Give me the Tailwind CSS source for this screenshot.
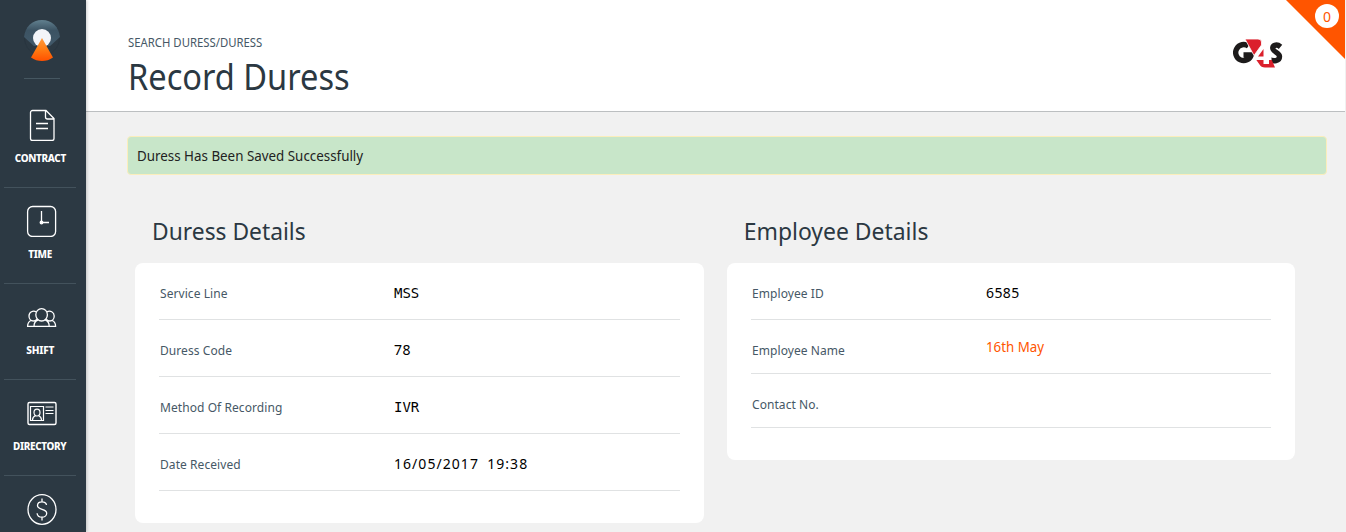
<!DOCTYPE html>
<html lang="en">
<head>
<meta charset="utf-8">
<title>Record Duress</title>
<script src="https://cdn.jsdelivr.net/npm/@tailwindcss/browser@4"></script>
</head>
<body class="flex h-[532px] w-[1346px] overflow-hidden bg-[#f1f1f1] font-['Noto_Sans',sans-serif] text-[#2b3842]">
<nav class="relative z-10 flex w-[86px] shrink-0 flex-col bg-[#2c3943] text-white shadow-[1px_0_3px_rgba(0,0,0,0.2)]">
  <div class="ml-6 h-[79px] w-9 shrink-0 border-b border-[#465761] pt-[19px]">
    <svg class="block" width="36" height="43" viewBox="0 0 36 43">
      <defs>
        <linearGradient id="dome" x1="0" y1="0" x2="0" y2="1"><stop offset="0" stop-color="#61808f"/><stop offset=".4" stop-color="#3c5363"/><stop offset="1" stop-color="#41596a"/></linearGradient>
        <linearGradient id="beam" x1="0" y1="0" x2="0" y2="1"><stop offset="0" stop-color="#ff9a3c"/><stop offset=".5" stop-color="#ff7c12"/><stop offset="1" stop-color="#ff5000"/></linearGradient>
      </defs>
      <circle cx="18" cy="19" r="17.5" fill="none" stroke="#27343d" stroke-width=".7"/>
      <path d="M0 18C1 8 8 1 18 1s17 7 18 17L26 27H10Z" fill="url(#dome)"/>
      <circle cx="18" cy="19" r="9" fill="#f3f5f9"/>
      <path d="M18 19 29 38.5Q24 42 18 42T7 38.5Z" fill="url(#beam)"/>
    </svg>
  </div>
  <a class="ml-1 flex h-[109px] w-[72px] shrink-0 flex-col items-center border-b border-[#43525c] pt-[30px]">
    <svg class="ml-[3px] h-8 w-8" viewBox="0 0 32 32" fill="none" stroke="#fff" stroke-width="1.3"><path d="M6.500 1.500H20l8 8v20a2 2 0 0 1-2 2H6.500a2 2 0 0 1-2-2v-26a2 2 0 0 1 2-2ZM19.500 1.500v6.500a2 2 0 0 0 2 2H28M10 14.500h12M10 19.500h12"/></svg>
    <span class="mt-[9px] scale-x-[0.9] text-[11px] leading-4 font-extrabold tracking-[-0.35px]">CONTRACT</span>
  </a>
  <a class="ml-1 flex h-24 w-[72px] shrink-0 flex-col items-center border-b border-[#43525c] pt-[17px]">
    <svg class="ml-[3px] h-8 w-8" viewBox="0 0 32 32" fill="none" stroke="#fff" stroke-width="1.3"><rect x="1.600" y="1.500" width="28" height="30" rx="5"/><path d="M15.500 6v11.500H23"/><circle cx="15.500" cy="17.500" r="1.300" fill="#fff"/></svg>
    <span class="mt-[9px] scale-x-[0.9] text-[11px] leading-4 font-extrabold tracking-[-0.35px]">TIME</span>
  </a>
  <a class="ml-1 flex h-24 w-[72px] shrink-0 flex-col items-center border-b border-[#43525c] pt-[17px]">
    <svg class="ml-[3px] h-8 w-8" viewBox="0 0 32 32" fill="none" stroke="#fff" stroke-width="1.3"><ellipse cx="15.600" cy="13.800" rx="5.800" ry="6.200"/><path d="M8 25.400c0-3.500 1.600-5.500 4-6.200M23.200 25.400c0-3.500-1.600-5.500-4-6.200M10.500 11C7 9 3 11 3 15c0 3 2 5 4.300 5 1.600 0 3-.8 3.700-2.300M20.700 11c3.500-2 7.500 0 7.500 4 0 3-2 5-4.300 5-1.600 0-3-.8-3.700-2.300M5 19.500c-2.200 1-3.400 3-3.400 5.900h28c0-2.900-1.200-4.900-3.400-5.900"/></svg>
    <span class="mt-[9px] scale-x-[0.92] text-[11px] leading-4 font-extrabold tracking-[-0.2px]">SHIFT</span>
  </a>
  <a class="ml-1 flex h-24 w-[72px] shrink-0 flex-col items-center border-b border-[#43525c] pt-[17px]">
    <svg class="ml-[3px] h-8 w-8" viewBox="0 0 32 32" fill="none" stroke="#fff" stroke-width="1.200"><rect x="2" y="5.500" width="28" height="22" rx="1.500" stroke-width="1.400"/><path d="M4.500 9.500h13v14h-13zM19.500 10h8M19.500 13.500h8M19.500 16.500h8M6.500 23c0-2.500 1-3.500 3-4.500M15.500 23c0-2.500-1-3.500-3-4.500"/><ellipse cx="11" cy="15.600" rx="3" ry="3.400"/></svg>
    <span class="mt-[9px] scale-x-[0.9] text-[11px] leading-4 font-extrabold tracking-[-0.35px]">DIRECTORY</span>
  </a>
  <a class="ml-1 flex w-[72px] flex-col items-center pt-[17px]">
    <svg class="ml-[3px] h-8 w-8" viewBox="0 0 32 32" fill="none" stroke="#fff" stroke-width="1.3"><ellipse cx="16" cy="16.500" rx="14" ry="14.800"/><path d="M20.500 12c-.3-2-2-3.200-4.500-3.200s-4.500 1.500-4.500 3.700c0 5 9.200 2.500 9.200 7.700 0 2.300-2 4-4.700 4s-4.700-1.500-4.900-4M16 5.500v3.300M16 24.200v3.300"/></svg>
  </a>
</nav>
<main class="min-w-0 flex-1">
  <header class="relative flex h-28 w-[1259px] justify-between border-b border-[#bcbfc1] bg-white">
    <div class="pt-[35px] pl-[42px]">
      <p class="origin-left scale-x-[0.945] text-[12px] leading-4 whitespace-nowrap text-[#465866]">SEARCH DURESS/DURESS</p>
      <h1 class="mt-[3px] origin-left scale-x-[0.905] text-[36px] leading-[46px] whitespace-nowrap">Record Duress</h1>
    </div>
    <svg class="mt-[38px] mr-[62px] h-[30px] w-[50px]" viewBox="0 0 50 30">
      <path d="M15.500 8.200A8 8 0 1 0 18.300 17H10.500" fill="none" stroke="#1d1b1b" stroke-width="5.400"/>
      <path d="M47.500 8.800C43.500 5.500 39 7.500 40 11c1.200 3.800 6.500 3.500 6.500 7.500 0 4.500-6 5.500-10.500 2.800" fill="none" stroke="#1d1b1b" stroke-width="5.400"/>
      <path d="M12 1h13q3.500 0 3.500 3v3L21 17.500Z" fill="#db202c" stroke="#fff" stroke-width=".8"/>
      <path d="M23 21.500h15.500l3.500 8H32q-4 0-5.500-3Z" fill="#db202c"/>
      <path d="M30.500 9.500H36v9h2.500V22H36v4h-5.500v-4H22v-3Z" fill="#fff"/>
      <path d="M30.500 11v7.500h-5.500Z" fill="#db202c"/>
    </svg>
    <svg class="absolute top-0 right-0 h-[59px] w-[59px]" viewBox="0 0 59 59"><path d="M0 0h59v59Z" fill="#ff5500"/></svg>
    <span class="absolute top-1 right-1.5 flex h-6 w-6 items-center justify-center rounded-full bg-white text-[14px] text-[#ff5500]">0</span>
  </header>
  <div class="mt-6 ml-[41px] flex h-[39px] w-[1200px] items-center rounded-[4px] border border-[#fbeebc] bg-[#c8e6c9] px-[9px] text-[14px] text-[#222]"><span class="origin-left scale-x-[0.955] whitespace-nowrap">Duress Has Been Saved Successfully</span></div>
  <div class="mt-[39px] ml-[49px] flex items-start gap-[23px]">
    <section class="w-[569px]">
      <h2 class="h-[49px] origin-left scale-x-[0.95] pl-[3px] text-[24px] leading-[34px]"><span class="pl-[15px]">Duress Details</span></h2>
      <dl class="h-[260px] rounded-[8px] bg-white px-6 text-[12px] text-[#465866]">
        <div class="flex h-[57px] items-center border-b border-[#e0e2e3] pt-1"><dt class="w-[235px] pt-0.5 pl-px tracking-[0.07px]">Service Line</dt><dd class="font-['DejaVu_Sans_Mono',monospace] text-[14px] text-black">MSS</dd></div>
        <div class="flex h-[57px] items-center border-b border-[#e0e2e3] pt-1"><dt class="w-[235px] pt-0.5 pl-px tracking-[0.07px]">Duress Code</dt><dd class="pb-0.5 text-[14px] tracking-[0.4px] text-black">78</dd></div>
        <div class="flex h-[57px] items-center border-b border-[#e0e2e3] pt-1"><dt class="w-[235px] pt-0.5 pl-px tracking-[0.07px]">Method Of Recording</dt><dd class="font-['DejaVu_Sans_Mono',monospace] text-[14px] text-black">IVR</dd></div>
        <div class="flex h-[57px] items-center border-b border-[#e0e2e3] pt-1"><dt class="w-[235px] pt-0.5 pl-px tracking-[0.07px]">Date Received</dt><dd class="pb-0.5 text-[14px] tracking-[1.05px] text-black [word-spacing:3.5px]">16/05/2017 19:38</dd></div>
      </dl>
    </section>
    <section class="w-[568px]">
      <h2 class="h-[49px] origin-left scale-x-[0.955] pl-[3px] text-[24px] leading-[34px]"><span class="pl-[14.500px]">Employee Details</span></h2>
      <dl class="h-[197px] rounded-[8px] bg-white px-6 text-[12px] text-[#465866]">
        <div class="flex h-[57px] items-center border-b border-[#e0e2e3] pt-1"><dt class="w-[235px] pt-0.5 pl-px tracking-[0.07px]">Employee ID</dt><dd class="pb-0.5 text-[14px] tracking-[0.4px] text-black">6585</dd></div>
        <div class="flex h-[54px] items-center border-b border-[#e0e2e3] pt-1"><dt class="w-[235px] pt-1 pl-px tracking-[0.07px]">Employee Name</dt><dd class="origin-left scale-x-[0.95] pb-1 text-[14px] text-[#ff5500]">16th May</dd></div>
        <div class="flex h-[54px] items-center border-b border-[#e0e2e3] pt-2"><dt class="w-[235px] pl-px tracking-[0.07px]">Contact No.</dt><dd></dd></div>
      </dl>
    </section>
  </div>
</main>
</body>
</html>
